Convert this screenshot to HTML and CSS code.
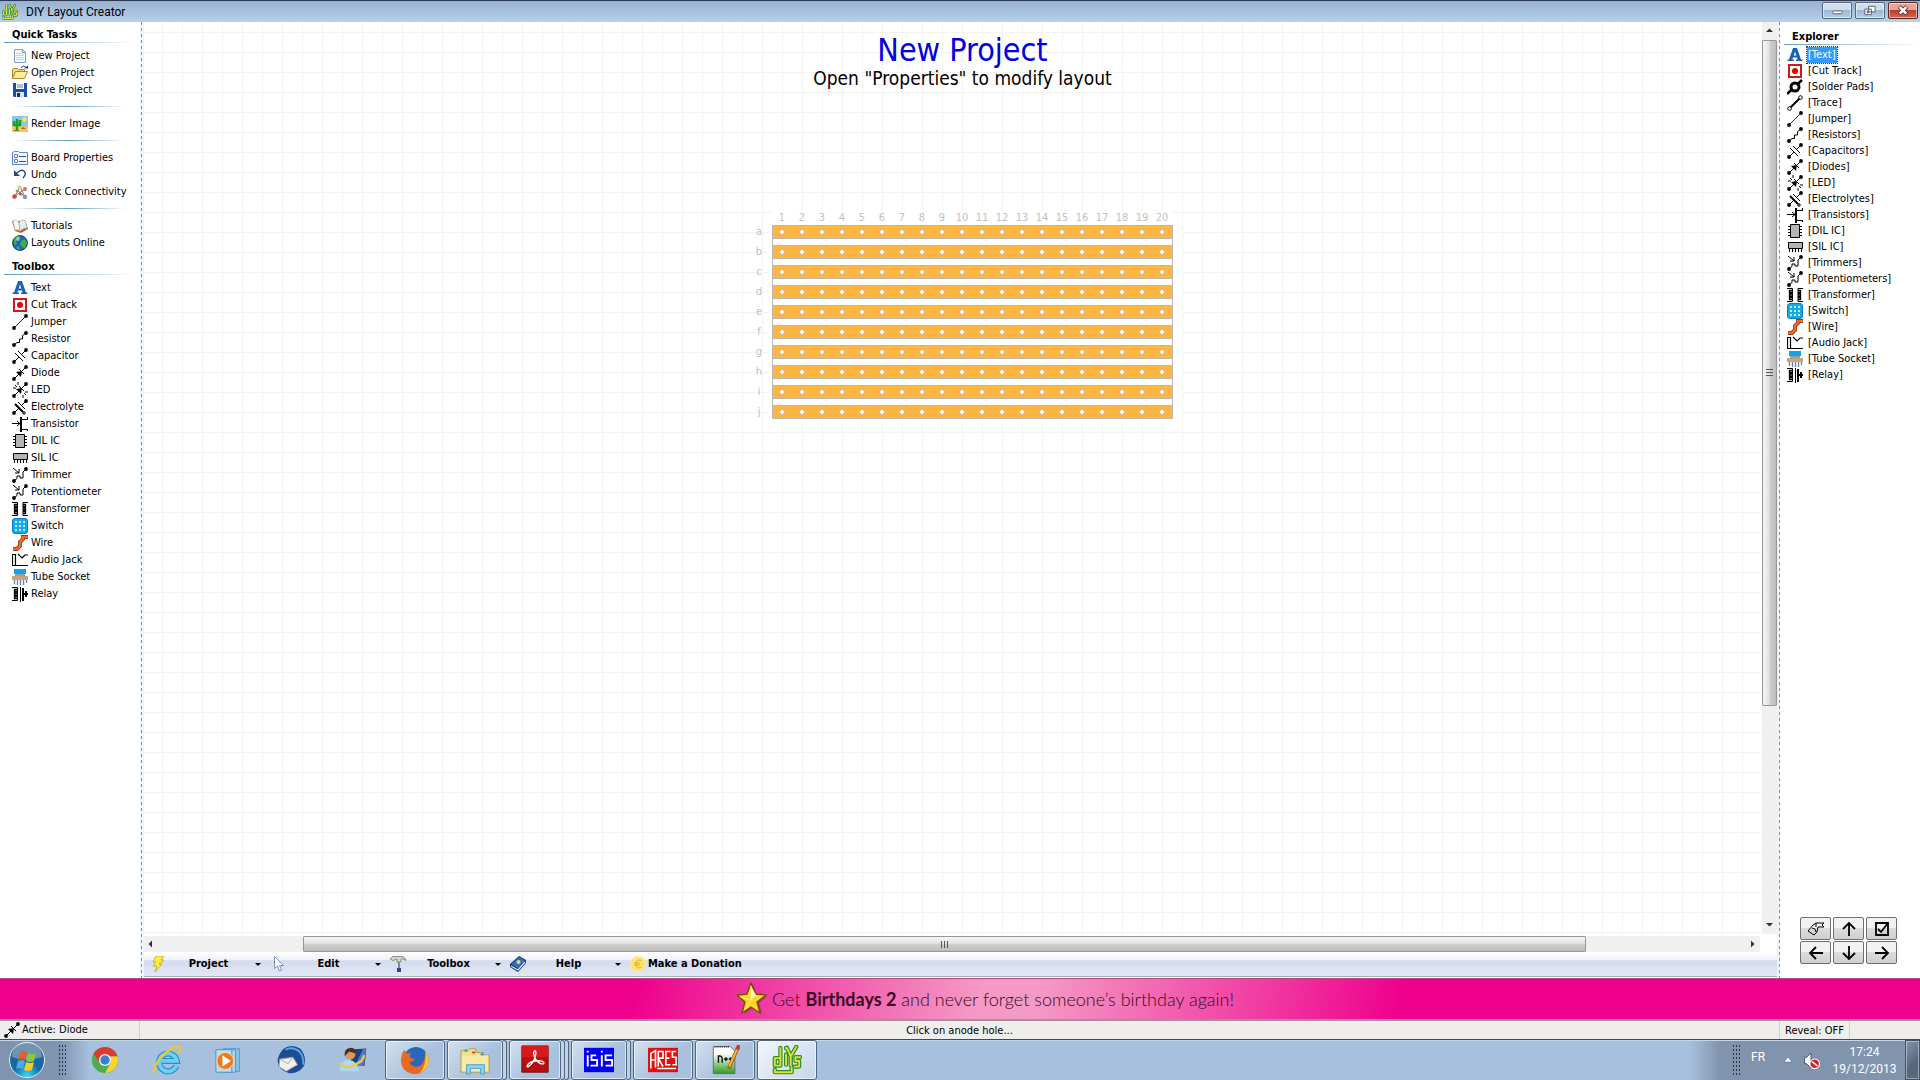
FILE: index.html
```html
<!DOCTYPE html>
<html lang="en">
<head>
    <meta charset="UTF-8">
    <meta name="viewport" content="width=device-width, initial-scale=1.0">
    <title>DIY Layout Creator</title>
    <link rel="stylesheet" href="styles.css">
</head>
<body>
    <!-- Icon sprite -->
    <svg class="sprite" aria-hidden="true">
        <symbol id="i-new" viewBox="0 0 16 16"><path d="M2.5 1.5h8l3 3v10h-11z" fill="#f6f9fd" stroke="#7f9cc4"/><path d="M10.500 1.500v3h3" fill="none" stroke="#7f9cc4"/><path d="M4 5.500h6M4 7.500h8M4 9.500h8M4 11.500h8" stroke="#c6d2e4"/></symbol>
        <symbol id="i-open" viewBox="0 0 16 16"><path d="M.5 13.500v-9l1-1h4l1 1h6v2" fill="#f5d76a" stroke="#a98a2a"/><path d="M.5 13.500l3-7h12l-3 7z" fill="#fdeea0" stroke="#a98a2a"/><path d="M9 2.500q3-3 5 0" fill="none" stroke="#1d3f7d"/><path d="M12 3.500h4v-3z" fill="#1d3f7d"/></symbol>
        <symbol id="i-save" viewBox="0 0 16 16"><path d="M1 1h14v14H2l-1-1z" fill="#1450a8"/><path d="M4 1h8v6H4z" fill="#fff"/><path d="M5 3h6M5 5h6" stroke="#5e7fb5"/><path d="M4 10h8v5H4z" fill="#d8e2f0"/><path d="M5 11h3v4H5z" fill="#0e3270"/></symbol>
        <symbol id="i-render" viewBox="0 0 16 16"><path d="M0 0h16v16H0z" fill="#8cc4f4"/><path d="M0 10q6-2 16 1v5H0z" fill="#f2c55d"/><circle cx="12.500" cy="3.500" r="2.200" fill="#ffee3c"/><path d="M5 14V3M2 5v4h3M8 4v5H5" fill="none" stroke="#14a51c" stroke-width="2.500"/><path d="M9 13l2-2 3 2z" fill="#a8642a"/><path d="M2 14.500h5" stroke="#a8642a"/></symbol>
        <symbol id="i-board" viewBox="0 0 16 16"><path d="M.5 14.500v-12l2-1h4l1 1h8v12z" fill="#f4f8fd" stroke="#5c86bf"/><path d="M2.500 4.500h3v3h-3zM2.500 9.500h3v3h-3z" fill="#fff" stroke="#5c86bf"/><path d="M7 6.500h7M7 11.500h7" stroke="#26508f"/></symbol>
        <symbol id="i-undo" viewBox="0 0 16 16"><path d="M5 6q4-4 7-2 3 3-1 7" fill="none" stroke="#26468f" stroke-width="1.400"/><path d="M2 3v6h6z" fill="#26468f"/></symbol>
        <symbol id="i-check" viewBox="0 0 16 16"><path d="M3 12l5-9 5 10M3 12l10-7M5 6l8 7" fill="none" stroke="#777"/><circle cx="7.500" cy="3" r="2" fill="#d8cf92"/><circle cx="13" cy="5" r="2" fill="#e06a50"/><circle cx="2.500" cy="12.500" r="2.300" fill="#cf4a34"/><circle cx="5" cy="7" r="1.300" fill="#8a9c5d"/><circle cx="13" cy="13" r="2.200" fill="#7799d6"/><circle cx="8.500" cy="10" r="1.500" fill="#d04a35"/></symbol>
        <symbol id="i-book" viewBox="0 0 16 16"><path d="M0 3l3 10 6 2 7-4-3-8z" fill="#b3692e"/><path d="M1 2q4-1 6 3l1 8q-2-2-5-1z" fill="#fdf7ee" stroke="#c9b49c" stroke-width=".6"/><path d="M7 5q2-4 6-3l2 8q-4 0-7 3z" fill="#e4edf8" stroke="#9a9a9a" stroke-width=".6"/></symbol>
        <symbol id="i-globe" viewBox="0 0 16 16"><circle cx="8" cy="8" r="7.500" fill="#1e63c8" stroke="#0b2c66" stroke-width=".8"/><path d="M2 4q3-4 6-3l-1 3-3 2 1 3-3 1zM9 6l4-2 2 4-2 5-3-1-2-3zM4 12l3-1 1 4q-3 0-4-3z" fill="#3bb537"/><circle cx="6" cy="4" r="2" fill="#bfe6ff" opacity=".6"/></symbol>
        <symbol id="i-text" viewBox="0 0 16 16"><path d="M6 1h4l4 11.500h1.500V14H9V12.500h1.500L10 10.500H6l-.7 2H7V14H.5V12.500H2L5.500 2.500zM8 4.500L6.700 8.500h2.600z" fill="#1c62b4" fill-rule="evenodd"/></symbol>
        <symbol id="i-cut" viewBox="0 0 16 16"><path d="M2 2h12v12H2z" fill="#fff" stroke="#d01818" stroke-width="2"/><circle cx="8" cy="8" r="3" fill="#e80000"/></symbol>
        <symbol id="i-pads" viewBox="0 0 16 16"><path d="M0 15L15 1" stroke="#000" stroke-width="2.500"/><circle cx="8" cy="8" r="4" fill="#fff" stroke="#000" stroke-width="3"/></symbol>
        <symbol id="i-trace" viewBox="0 0 16 16"><path d="M3 13L13 3" stroke="#000" stroke-width="2"/><circle cx="2.500" cy="13.500" r="1.800" fill="#fff" stroke="#000"/><circle cx="13.500" cy="2.500" r="1.800" fill="#fff" stroke="#000"/></symbol>
        <symbol id="dots" viewBox="0 0 16 16"><circle cx="2" cy="14" r="1.900"/><circle cx="14" cy="2" r="1.900"/></symbol>
        <symbol id="i-jumper" viewBox="0 0 16 16"><path d="M2 14L14 2" stroke="#2020a0"/><use href="#dots"/></symbol>
        <symbol id="i-resistor" viewBox="0 0 16 16"><path d="M2 14l3-2.500h2.500V8h3V4.500L14 2" fill="none" stroke="#000"/><use href="#dots"/></symbol>
        <symbol id="i-cap" viewBox="0 0 16 16"><path d="M2 14l5-5M9 7l5-5M3 5l8 8M6 3l7 7" stroke="#000"/><use href="#dots"/></symbol>
        <symbol id="i-diode" viewBox="0 0 16 16"><path d="M2 14L14 2M7 4l5 5" stroke="#000"/><path d="M4 7l6-1-1 6z"/><use href="#dots"/></symbol>
        <symbol id="i-led" viewBox="0 0 16 16"><path d="M2 14L14 2M7 4l5 5M3 3l2 2M6 0v3M1 6h3M12 11l2 2M11 13v3M13 10h3" stroke="#000"/><path d="M4 7l6-1-1 6z"/><use href="#dots"/></symbol>
        <symbol id="i-elec" viewBox="0 0 16 16"><path d="M2 14l5-5M9 7l5-5M6 3l7 7M10 14h4M12 12v4" stroke="#000"/><path d="M3 5l8 8" stroke="#000" stroke-width="2"/><use href="#dots"/></symbol>
        <symbol id="i-trans" viewBox="0 0 16 16"><path d="M0 7.500h8M5 5l3 2.500L5 10M10 3.500h6M10 13.500h6M15.500 1v3M15.500 13v2" fill="none" stroke="#000"/><path d="M9 1v15" stroke="#000" stroke-width="2"/></symbol>
        <symbol id="i-dil" viewBox="0 0 16 16"><path d="M3.500 1.500h9v13h-9z" fill="#b4b4b4" stroke="#000"/><path d="M1 3.500h2M1 6.500h2M1 9.500h2M1 12.500h2M13 3.500h2M13 6.500h2M13 9.500h2M13 12.500h2" stroke="#000"/></symbol>
        <symbol id="i-sil" viewBox="0 0 16 16"><path d="M1.500 3.500h14v6h-14z" fill="#b4b4b4" stroke="#000"/><path d="M2.500 10v3M5.500 10v3M8.500 10v3M11.500 10v3M14.500 10v3" stroke="#000"/></symbol>
        <symbol id="i-trim" viewBox="0 0 16 16"><path d="M2 14l3-2.500V9h3v2h3V5l3-3M1 1l6 5M7 2v4H3" fill="none" stroke="#000"/><use href="#dots"/></symbol>
        <symbol id="i-xfmr" viewBox="0 0 16 16"><path d="M0 1.500h5.500v13H0M16 1.500h-5v13h5" fill="none" stroke="#000"/><path d="M5 3.500H2.500v2H5M5 7H2.500v2H5M5 10.500H2.500v2H5M11 3.500h2.500v2H11M11 7h2.500v2H11M11 10.500h2.500v2H11" fill="none" stroke="#000" stroke-width="1.300"/></symbol>
        <symbol id="i-switch" viewBox="0 0 16 16"><rect x=".5" y=".5" width="15" height="15" rx="2.500" fill="#12aeec" stroke="#0b7fc0"/><path d="M3 4h10M3 8h10M3 12h10" stroke="#fff" stroke-width="1.600" stroke-dasharray="2"/></symbol>
        <symbol id="i-wire" viewBox="0 0 16 16"><path d="M1 14h4l3-3V7l3-3V2h5" fill="none" stroke="#a63c10" stroke-width="4"/><path d="M1 14h4l3-3V7l3-3V2h5" fill="none" stroke="#ee6a28" stroke-width="2.200"/></symbol>
        <symbol id="i-jack" viewBox="0 0 16 16"><path d="M.5 2.500h3v11h-3zM4 13.500h12M6 2l4 4 3-3h3" fill="none" stroke="#000" stroke-width="1.200"/></symbol>
        <symbol id="i-tube" viewBox="0 0 16 16"><path d="M2 0h12v5H2z" fill="#10a4e6"/><path d="M3 6h10" stroke="#246"/><path d="M0 7h16v4H0z" fill="#c4a582"/><path d="M2.500 11v4M5.500 11v5M8.500 11v5M11.500 11v5M14.500 11v3" stroke="#6c7f96" stroke-width="1.300"/></symbol>
        <symbol id="i-relay" viewBox="0 0 16 16"><path d="M0 1.500h5.500v13H0M8.500 1v15" fill="none" stroke="#000"/><path d="M5 3.500H2.500v2H5M5 7H2.500v2H5M5 10.500H2.500v2H5" fill="none" stroke="#000" stroke-width="1.300"/><path d="M11 2v13M12 8h4M14 5v6" stroke="#000" stroke-width="2"/></symbol>
        <symbol id="i-diy" viewBox="0 0 32 32"><g fill="none" stroke-linecap="round" stroke-linejoin="round"><path d="M9 3v19H3v-8h5M15 3v1M15 10v11M20 12l-4-9M20 12l6-10M20 12v10M30 13h-5v4h4v6h-5M3 29h18M3 29v-3M21 29v-5" stroke="#2f8a28" stroke-width="4.500"/><path d="M9 3v19H3v-8h5M15 3v1M15 10v11M20 12l-4-9M20 12l6-10M20 12v10M30 13h-5v4h4v6h-5M3 29h18M3 29v-3M21 29v-5" stroke="#d8e23a" stroke-width="2"/></g></symbol>
    </svg>

    <header class="titlebar">
        <svg class="icon"><use href="#i-diy"/></svg>
        <h1>DIY Layout Creator</h1>
        <div class="win-buttons">
            <button type="button" aria-label="Minimize"><svg viewBox="0 0 30 16"><rect x="10.500" y="8.500" width="10" height="3" rx="1" fill="#fff" stroke="#56606e"/></svg></button>
            <button type="button" aria-label="Restore"><svg viewBox="0 0 30 16"><path d="M13.500 3.500h7v6h-7zM9.500 6.500h7v6h-7z" fill="#fff" stroke="#56606e"/><path d="M12 8.500h2v2h-2z" fill="#9db4cf" stroke="#56606e"/></svg></button>
            <button type="button" class="close" aria-label="Close"><svg viewBox="0 0 30 16"><path d="M11 4l8 8M19 4l-8 8" stroke="#6b3434" stroke-width="4.500"/><path d="M11.500 4.500l7 7M18.500 4.500l-7 7" stroke="#fff" stroke-width="2.600"/></svg></button>
        </div>
    </header>

    <main class="workspace">
        <aside class="sidebar">
            <h2>Quick Tasks</h2>
            <ul class="tools">
                <li><button type="button"><svg class="icon"><use href="#i-new"/></svg>New Project</button></li>
                <li><button type="button"><svg class="icon"><use href="#i-open"/></svg>Open Project</button></li>
                <li><button type="button"><svg class="icon"><use href="#i-save"/></svg>Save Project</button></li>
                <li class="sep"></li>
                <li><button type="button"><svg class="icon"><use href="#i-render"/></svg>Render Image</button></li>
                <li class="sep"></li>
                <li><button type="button"><svg class="icon"><use href="#i-board"/></svg>Board Properties</button></li>
                <li><button type="button"><svg class="icon"><use href="#i-undo"/></svg>Undo</button></li>
                <li><button type="button"><svg class="icon"><use href="#i-check"/></svg>Check Connectivity</button></li>
                <li class="sep"></li>
                <li><button type="button"><svg class="icon"><use href="#i-book"/></svg>Tutorials</button></li>
                <li><button type="button"><svg class="icon"><use href="#i-globe"/></svg>Layouts Online</button></li>
            </ul>
            <h2>Toolbox</h2>
            <ul class="tools">
                <li><button type="button"><svg class="icon"><use href="#i-text"/></svg>Text</button></li>
                <li><button type="button"><svg class="icon"><use href="#i-cut"/></svg>Cut Track</button></li>
                <li><button type="button"><svg class="icon"><use href="#i-jumper"/></svg>Jumper</button></li>
                <li><button type="button"><svg class="icon"><use href="#i-resistor"/></svg>Resistor</button></li>
                <li><button type="button"><svg class="icon"><use href="#i-cap"/></svg>Capacitor</button></li>
                <li><button type="button"><svg class="icon"><use href="#i-diode"/></svg>Diode</button></li>
                <li><button type="button"><svg class="icon"><use href="#i-led"/></svg>LED</button></li>
                <li><button type="button"><svg class="icon"><use href="#i-elec"/></svg>Electrolyte</button></li>
                <li><button type="button"><svg class="icon"><use href="#i-trans"/></svg>Transistor</button></li>
                <li><button type="button"><svg class="icon"><use href="#i-dil"/></svg>DIL IC</button></li>
                <li><button type="button"><svg class="icon"><use href="#i-sil"/></svg>SIL IC</button></li>
                <li><button type="button"><svg class="icon"><use href="#i-trim"/></svg>Trimmer</button></li>
                <li><button type="button"><svg class="icon"><use href="#i-trim"/></svg>Potentiometer</button></li>
                <li><button type="button"><svg class="icon"><use href="#i-xfmr"/></svg>Transformer</button></li>
                <li><button type="button"><svg class="icon"><use href="#i-switch"/></svg>Switch</button></li>
                <li><button type="button"><svg class="icon"><use href="#i-wire"/></svg>Wire</button></li>
                <li><button type="button"><svg class="icon"><use href="#i-jack"/></svg>Audio Jack</button></li>
                <li><button type="button"><svg class="icon"><use href="#i-tube"/></svg>Tube Socket</button></li>
                <li><button type="button"><svg class="icon"><use href="#i-relay"/></svg>Relay</button></li>
            </ul>
        </aside>

        <div class="splitter"></div>

        <section class="editor">
            <div class="view">
                <div class="canvas">
                    <div class="sheet">
                        <h2 class="project-name">New Project</h2>
                        <p class="project-note">Open "Properties" to modify layout</p>
                        <div class="columns">
                            <span>1</span><span>2</span><span>3</span><span>4</span><span>5</span><span>6</span><span>7</span><span>8</span><span>9</span><span>10</span><span>11</span><span>12</span><span>13</span><span>14</span><span>15</span><span>16</span><span>17</span><span>18</span><span>19</span><span>20</span>
                        </div>
                        <div class="board-row">
                            <div class="rows">
                                <span>a</span><span>b</span><span>c</span><span>d</span><span>e</span><span>f</span><span>g</span><span>h</span><span>i</span><span>j</span>
                            </div>
                            <div class="board">
                                <div class="strip"></div>
                                <div class="strip"></div>
                                <div class="strip"></div>
                                <div class="strip"></div>
                                <div class="strip"></div>
                                <div class="strip"></div>
                                <div class="strip"></div>
                                <div class="strip"></div>
                                <div class="strip"></div>
                                <div class="strip"></div>
                            </div>
                        </div>
                    </div>
                </div>
                <div class="scroll-v">
                    <svg viewBox="0 0 15 18"><path d="M4 10l3.500-3.500L11 10z"/></svg>
                    <div class="track"><div class="thumb"><i></i></div></div>
                    <svg viewBox="0 0 15 18"><path d="M4 7l3.500 3.500L11 7z"/></svg>
                </div>
            </div>
            <div class="scroll-h">
                <svg viewBox="0 0 16 16"><path d="M8 4.500L4.500 8 8 11.500z"/></svg>
                <div class="track"><div class="thumb"><i></i></div></div>
                <svg viewBox="0 0 16 16"><path d="M7 4.500L10.500 8 7 11.500z"/></svg>
            </div>
            <nav class="menu">
                <button type="button">
                    <svg class="icon" viewBox="0 0 16 16"><path d="M6 0h8l-3 4h3L9 8h3l-7 8 2-6H3l3-4H3z" fill="#fbee3e" stroke="#c9a51c" stroke-width=".8"/></svg>
                    <span>Project</span><b></b>
                </button>
                <button type="button">
                    <svg class="icon" viewBox="0 0 16 16"><path d="M4.500.5v12l3-2.500 2 5 2-1-2-4.500h4z" fill="#fff" stroke="#7793bd"/></svg>
                    <span>Edit</span><b></b>
                </button>
                <button type="button">
                    <svg class="icon" viewBox="0 0 16 16"><path d="M0 3l3-2.500h9q3 .5 4 4l-3-1.500h-2v3H7V3L3 4.500z" fill="#d5d5d5" stroke="#777" stroke-width=".8"/><path d="M9 6v6" stroke="#888" stroke-width="2"/><path d="M7 12h4v4H7z" fill="#1c4d96"/></svg>
                    <span>Toolbox</span><b></b>
                </button>
                <button type="button">
                    <svg class="icon" viewBox="0 0 16 16"><path d="M0 8L9 0l7 4v3l-8 9-8-5z" fill="#123068"/><path d="M1 8l8-7 6 3.500-7 8z" fill="#2e6fc0"/><path d="M1 10l7 4 7-8" fill="none" stroke="#e6edf8" stroke-width="1.200"/><circle cx="8.500" cy="6" r="2" fill="#f4d94c"/></svg>
                    <span>Help</span><b></b>
                </button>
                <button type="button" class="donate">
                    <svg class="icon" viewBox="0 0 16 16"><circle cx="8" cy="8" r="7.500" fill="#fbe374" stroke="#f6ee9e"/><path d="M11.500 4.500q-5-2-5.500 3.500t5.500 3.500M4 7h6M4 9h6" fill="none" stroke="#e8a92c"/></svg>
                    <span>Make a Donation</span>
                </button>
            </nav>
        </section>

        <div class="splitter right"></div>

        <aside class="explorer">
            <h2>Explorer</h2>
            <ul class="tools">
                <li><button type="button" class="selected"><svg class="icon"><use href="#i-text"/></svg><span>[Text]</span></button></li>
                <li><button type="button"><svg class="icon"><use href="#i-cut"/></svg><span>[Cut Track]</span></button></li>
                <li><button type="button"><svg class="icon"><use href="#i-pads"/></svg><span>[Solder Pads]</span></button></li>
                <li><button type="button"><svg class="icon"><use href="#i-trace"/></svg><span>[Trace]</span></button></li>
                <li><button type="button"><svg class="icon"><use href="#i-jumper"/></svg><span>[Jumper]</span></button></li>
                <li><button type="button"><svg class="icon"><use href="#i-resistor"/></svg><span>[Resistors]</span></button></li>
                <li><button type="button"><svg class="icon"><use href="#i-cap"/></svg><span>[Capacitors]</span></button></li>
                <li><button type="button"><svg class="icon"><use href="#i-diode"/></svg><span>[Diodes]</span></button></li>
                <li><button type="button"><svg class="icon"><use href="#i-led"/></svg><span>[LED]</span></button></li>
                <li><button type="button"><svg class="icon"><use href="#i-elec"/></svg><span>[Electrolytes]</span></button></li>
                <li><button type="button"><svg class="icon"><use href="#i-trans"/></svg><span>[Transistors]</span></button></li>
                <li><button type="button"><svg class="icon"><use href="#i-dil"/></svg><span>[DIL IC]</span></button></li>
                <li><button type="button"><svg class="icon"><use href="#i-sil"/></svg><span>[SIL IC]</span></button></li>
                <li><button type="button"><svg class="icon"><use href="#i-trim"/></svg><span>[Trimmers]</span></button></li>
                <li><button type="button"><svg class="icon"><use href="#i-trim"/></svg><span>[Potentiometers]</span></button></li>
                <li><button type="button"><svg class="icon"><use href="#i-xfmr"/></svg><span>[Transformer]</span></button></li>
                <li><button type="button"><svg class="icon"><use href="#i-switch"/></svg><span>[Switch]</span></button></li>
                <li><button type="button"><svg class="icon"><use href="#i-wire"/></svg><span>[Wire]</span></button></li>
                <li><button type="button"><svg class="icon"><use href="#i-jack"/></svg><span>[Audio Jack]</span></button></li>
                <li><button type="button"><svg class="icon"><use href="#i-tube"/></svg><span>[Tube Socket]</span></button></li>
                <li><button type="button"><svg class="icon"><use href="#i-relay"/></svg><span>[Relay]</span></button></li>
            </ul>
            <div class="move-pad">
                <button type="button" aria-label="Rotate"><svg viewBox="0 0 18 16"><path d="M1 10l5-6 3-2h8l-2 2 2 2h-6l-1 5-3 3zM5 7l3 1 1 3M9 2v4" fill="none" stroke="#000"/></svg></button>
                <button type="button" aria-label="Up"><svg viewBox="0 0 18 16"><path d="M9 15V3M3 8l6-6 6 6" fill="none" stroke="#000" stroke-width="1.800"/></svg></button>
                <button type="button" aria-label="Select"><svg viewBox="0 0 18 16"><path d="M3 2h12v12H3z" fill="none" stroke="#000" stroke-width="1.800"/><path d="M5 8l3 3 7-9" fill="none" stroke="#000" stroke-width="1.800"/></svg></button>
                <button type="button" aria-label="Left"><svg viewBox="0 0 18 16"><path d="M16 8H4M9 2L3 8l6 6" fill="none" stroke="#000" stroke-width="1.800"/></svg></button>
                <button type="button" aria-label="Down"><svg viewBox="0 0 18 16"><path d="M9 1v12M3 8l6 6 6-6" fill="none" stroke="#000" stroke-width="1.800"/></svg></button>
                <button type="button" aria-label="Right"><svg viewBox="0 0 18 16"><path d="M2 8h12M9 2l6 6-6 6" fill="none" stroke="#000" stroke-width="1.800"/></svg></button>
            </div>
        </aside>
    </main>

    <a class="banner" href="#">
        <svg class="star" viewBox="0 0 32 34"><path d="M17 2l4 11 10 1-8 7 3 11-9-6-9 6 3-11-8-7 10-1z" fill="#6b2038" opacity=".5"/><path d="M15 1l4 11 11 1-9 7 3 11-9-6-9 6 3-11-8-7 10-1z" fill="#fbd824" stroke="#75520b" stroke-width="1.400"/><path d="M15 4v14l5-5M15 18l-11-3M15 18l-6 10" fill="#fff6a0" stroke="#fff3a0" stroke-width=".8"/></svg>
        <span>Get <strong>Birthdays 2</strong> and never forget someone’s birthday again!</span>
    </a>

    <footer class="statusbar">
        <div class="active-tool"><svg class="icon"><use href="#i-diode"/></svg>Active: Diode</div>
        <div class="hint">Click on anode hole...</div>
        <div class="reveal">Reveal: OFF</div>
        <div class="rest"></div>
    </footer>

    <div class="taskbar">
        <button type="button" class="start" aria-label="Start">
            <svg viewBox="0 0 38 38"><defs><radialGradient id="orb" cx=".5" cy=".95" r=".9"><stop offset="0" stop-color="#37d7fb"/><stop offset=".45" stop-color="#0d6aa5"/><stop offset="1" stop-color="#3c6685"/></radialGradient></defs><circle cx="19" cy="19" r="17.500" fill="url(#orb)" stroke="#dcebf5"/><path d="M4 16a15 15 0 0130 0q-15 5-30 0z" fill="#fff" opacity=".3"/><path d="M12 11q4-2 7 0l-2 8q-3-2-7 0z" fill="#ec5a25"/><path d="M20 12q4 2 8 0l-2 8q-4 2-8 0z" fill="#8cc63c"/><path d="M10 20q4-2 7 0l-2 8q-3-2-7 0z" fill="#4fa9e8"/><path d="M18 21q4 2 8 0l-2 8q-4 2-8 0z" fill="#fcc62c"/></svg>
        </button>
        <div class="grip"></div>
        <div class="pinned">
            <button type="button" aria-label="Chrome"><svg viewBox="0 0 32 32"><circle cx="16" cy="16" r="14" fill="#4bae4f"/><path d="M28 9a14 14 0 01-12 21l6-11q1-4-2-7h9z" fill="#fcd22e"/><path d="M4 9l6 10 6-7h13L28 9A14 14 0 004 9z" fill="#dc3a2c"/><circle cx="16" cy="16" r="6.500" fill="#f2f2f2"/><circle cx="16" cy="16" r="5" fill="#3b7fd4"/></svg></button>
            <button type="button" aria-label="Internet Explorer"><svg viewBox="0 0 32 32"><path d="M26 22a9.500 9.500 0 11.500-5H10" fill="none" stroke="#2a8fd0" stroke-width="6.500"/><path d="M26 22a9.500 9.500 0 11.500-5H10" fill="none" stroke="#6fd0f6" stroke-width="4"/><path d="M3 30Q-1 27 9 14 23-1 29 2q2 2-1 7" fill="none" stroke="#f3c52c" stroke-width="2.500"/></svg></button>
            <button type="button" aria-label="Media Player"><svg viewBox="0 0 32 32"><path d="M10 4h17v24H10z" fill="#8cc4e4" stroke="#4c94c2"/><path d="M7 5h16v24H7z" fill="#a8d6ee" stroke="#4c94c2"/><path d="M2 5h17v24H2z" fill="#b8def2" stroke="#4c94c2"/><circle cx="12" cy="17" r="9" fill="#ee7a1c" stroke="#fbd6ae"/><path d="M9 11v12l9-6z" fill="#fff"/></svg></button>
            <button type="button" aria-label="Thunderbird"><svg viewBox="0 0 32 32"><path d="M8 4Q17-2 26 4q7 8 4 18-6 9-16 8Q0 26 2 14 4 8 8 4z" fill="#1b4d92"/><path d="M10 5q8-4 15 2 5 6 4 14" fill="none" stroke="#58a8e6" stroke-width="2"/><path d="M4 15l14-2 5 8-12 7-8-5z" fill="#f0f0ee" stroke="#999"/><path d="M4 15l9 5 5-7" fill="none" stroke="#aaa"/></svg></button>
            <button type="button" aria-label="Remote Support"><svg viewBox="0 0 32 32"><path d="M13 4l18-1-2 20-16-1z" fill="#1d3f86" stroke="#b7bcc4" stroke-width="1.500"/><path d="M27 4l3-1-2 18-10 1z" fill="#4a7fc8"/><circle cx="13" cy="10" r="5.500" fill="#d29a5e"/><path d="M7 12q-1-9 8-9 5 2 4 6l-7-2z" fill="#4c3018"/><path d="M2 28q0-12 10-12 9 1 10 12z" fill="#a8dcf2"/><path d="M1 19q6 10 24-2l3-6" fill="none" stroke="#f3ca3e" stroke-width="2.500"/></svg></button>
        </div>
        <div class="running">
            <div class="task"><button type="button" aria-label="Firefox"><svg viewBox="0 0 32 32"><circle cx="17" cy="15" r="13" fill="#2769b8"/><path d="M27 6q6 9 2 17-5 9-14 8Q2 29 1 17 1 9 5 5l2 4 5-1q-3 4 0 6l4 1q-2 3-6 3 3 6 9 5 8-2 8-17z" fill="#ea6820"/><path d="M27 6q6 9 2 17-3 5-8 7 8-9 6-24z" fill="#fbc532"/></svg></button></div>
            <div class="task"><button type="button" aria-label="Explorer"><svg viewBox="0 0 32 32"><path d="M1 6h7l2-2h7v4h8v3h6v18H1z" fill="#f3dc8a" stroke="#b99c48"/><path d="M2 11h28v17H2z" fill="#faeaa8"/><path d="M5 6h3" stroke="#28a83c" stroke-width="2"/><path d="M13 8h3" stroke="#d04030" stroke-width="2"/><path d="M22 10h3" stroke="#2a8ad0" stroke-width="2"/><path d="M7 31V21h19v10h-4v-6H11v6z" fill="#8fd2ee" stroke="#4aa0cc"/></svg></button><i></i></div>
            <div class="task"><button type="button" aria-label="Acrobat Reader"><svg viewBox="0 0 32 32"><path d="M2 1h28v28H2z" fill="#b80f0f" stroke="#6e0a0a"/><path d="M2 1h28v12H2z" fill="#d81a1a"/><path d="M16 6q-3 1 0 8 4 7 9 6 2-2-3-3-8-1-13 3-3 4 0 3 5-3 7-10 2-6 0-7z" fill="none" stroke="#fff" stroke-width="1.400"/></svg></button><i></i><i></i></div>
            <div class="task"><button type="button" aria-label="ISIS"><svg viewBox="0 0 32 32"><path d="M0 3h32v26H0z" fill="#0000f0"/><path d="M4 11v12M4 6v2M13 11H8v5h6v6H7M19 11v12M19 6v2M30 11h-7v5h7v6h-7" fill="none" stroke="#fff" stroke-width="2"/></svg></button><i></i></div>
            <div class="task"><button type="button" aria-label="ARES"><svg viewBox="0 0 32 32"><path d="M0 3h32v26H0z" fill="#e01010"/><path d="M3 25V9l5-3v18M3 16h5M11 23V7h5v7h-5l5 9M24 7h-5v14h5M19 14h4M30 7h-4v6h4v8h-4M10 25h20" fill="none" stroke="#fff" stroke-width="1.700"/></svg></button></div>
            <div class="task"><button type="button" aria-label="Notepad++"><svg viewBox="0 0 32 32"><defs><linearGradient id="npp" x2="0" y2="1"><stop offset=".25" stop-color="#fff"/><stop offset="1" stop-color="#2f9c20"/></linearGradient></defs><path d="M3.500 1.500h18l5 5v24h-23z" fill="url(#npp)" stroke="#667"/><path d="M5 2h16" stroke="#444" stroke-width="2" stroke-dasharray="1"/><path d="M9 19v-8M9 12q4-1 4 3v4M15 15h4M17 13v4M20 15h4M22 13v4" fill="none" stroke="#111" stroke-width="1.500"/><path d="M30 2L20 25" stroke="#9c6312" stroke-width="4"/><path d="M29.500 3L20.500 23" stroke="#f0b63a" stroke-width="2.200"/><path d="M31 0l-2 5" stroke="#b8434c" stroke-width="4"/></svg></button></div>
            <div class="task current"><button type="button" aria-label="DIY Layout Creator"><svg><use href="#i-diy"/></svg></button></div>
        </div>
        <div class="tray">
            <div class="grip"></div>
            <span class="lang">FR</span>
            <button type="button" class="more" aria-label="Show hidden icons"><svg viewBox="0 0 10 8"><path d="M1 6l4-5 4 5z" fill="#fff" stroke="#55657d" stroke-width=".5"/></svg></button>
            <button type="button" class="sound" aria-label="Volume"><svg viewBox="0 0 16 16"><path d="M1.500 5v6h2l4 4V1l-4 4z" fill="#fff" stroke="#445" stroke-width=".8"/><circle cx="11" cy="11" r="4.500" fill="#d51f1f" stroke="#fff"/><path d="M8.500 9l5 4" stroke="#fff" stroke-width="1.500"/></svg></button>
            <div class="clock"><span>17:24</span><span>19/12/2013</span></div>
            <button type="button" class="show-desktop" aria-label="Show desktop"></button>
        </div>
    </div>
</body>
</html>
```
FILE: styles.css
```css
:root {
    --ui-font: 'DejaVu Sans Condensed', 'Noto Sans', sans-serif;
    --shell-font: Roboto, 'Noto Sans', sans-serif;
    --line: #5b9bc8;
    --pink: #ee008c;
    --copper: #ffb640;
    --label: #c0c0c0;
}

* {
    margin: 0;
    padding: 0;
    box-sizing: border-box;
}

body {
    height: 100vh;
    display: flex;
    flex-direction: column;
    overflow: hidden;
    background: #fff;
    color: #000;
    font: 11px/16px var(--ui-font);
}

button {
    background: none;
    border: none;
    color: inherit;
    font: inherit;
    cursor: pointer;
}

ul {
    list-style: none;
}

svg {
    display: block;
}

.sprite {
    position: absolute;
    width: 0;
    height: 0;
}

.icon {
    width: 16px;
    height: 16px;
    flex: none;
}

/* Title bar */
.titlebar {
    display: flex;
    align-items: center;
    height: 22px;
    padding: 0 2px;
    border-top: 1px solid #2b3850;
    background: linear-gradient(#96b1d0, #b9d0ea);
}

.titlebar h1 {
    flex: 1;
    margin-left: 8px;
    font: 12px/16px var(--shell-font);
}

.win-buttons {
    display: flex;
    align-self: flex-start;
    gap: 3px;
    padding-top: 1px;
}

.win-buttons button {
    width: 30px;
    height: 17px;
    border: 1px solid #55687f;
    border-radius: 2px;
    background: linear-gradient(#cfdded 45%, #9db7d4 50%, #b8cee6);
    box-shadow: inset 0 0 0 1px rgba(255, 255, 255, 0.5);
}

.win-buttons .close {
    border-color: #5a2626;
    background: linear-gradient(#e2a597 45%, #b8402c 50%, #cf6a4e);
}

/* Panels */
.workspace {
    flex: 1;
    display: flex;
    min-height: 0;
}

.sidebar {
    width: 140px;
    padding-top: 5px;
}

.explorer {
    width: 140px;
    display: flex;
    flex-direction: column;
    padding: 7px 0 14px 4px;
}

.sidebar h2,
.explorer h2 {
    height: 16px;
    padding-left: 8px;
    font-size: 11px;
    line-height: 16px;
    background: linear-gradient(90deg, var(--line), #fff) left bottom / 100% 1px no-repeat;
}

.sidebar h2 {
    margin: 0 4px 4px;
}

.explorer h2 {
    margin-bottom: 2px;
}

.sidebar .tools + h2 {
    margin-top: 8px;
}

.tools button {
    display: flex;
    align-items: center;
    gap: 3px;
    width: 100%;
    height: 17px;
    padding-left: 12px;
    text-align: left;
    white-space: nowrap;
}

.tools .sep {
    height: 17px;
    margin: 0 14px 0 12px;
    background: linear-gradient(90deg, #fff, var(--line), #fff) center / 100% 1px no-repeat;
}

.explorer .tools {
    flex: 1;
}

.explorer .tools button {
    height: 16px;
    gap: 4px;
    padding-left: 3px;
}

.explorer .tools span {
    padding: 0 1px;
}

.explorer .selected span {
    color: #fff;
    background: #3399ff;
    outline: 1px dotted #1a3a5a;
}

.splitter {
    width: 4px;
    background:
        repeating-linear-gradient(var(--line) 0 3px, transparent 3px 6px) 1px 0 / 1px 100% no-repeat,
        #edf5fb;
}

.splitter.right {
    width: 3px;
    background:
        repeating-linear-gradient(var(--line) 0 3px, transparent 3px 6px) 2px 0 / 1px 100% no-repeat,
        #edf5fb;
}

.move-pad {
    display: grid;
    grid-template-columns: repeat(3, 31px);
    gap: 1px 2px;
    padding-left: 16px;
}

.move-pad button {
    display: flex;
    align-items: center;
    justify-content: center;
    height: 23px;
    border: 1px solid #707070;
    border-radius: 2px;
    background: linear-gradient(#f2f2f2 48%, #dcdcdc 50%, #cfcfcf);
}

.move-pad svg {
    width: 18px;
    height: 16px;
}

/* Editor */
.editor {
    flex: 1;
    display: flex;
    flex-direction: column;
    min-width: 0;
    padding-bottom: 1px;
}

.view {
    flex: 1;
    display: flex;
    min-height: 0;
}

.canvas {
    position: relative;
    flex: 1;
    overflow: hidden;
    background:
        linear-gradient(90deg, #f3f3f3 1px, transparent 1px) 18px 0 / 20px 20px,
        linear-gradient(#f3f3f3 1px, transparent 1px) 0 10px / 20px 20px,
        #fff;
}

.sheet {
    position: absolute;
    left: 608px;
    top: 0;
    width: 421px;
    text-align: center;
}

.project-name {
    margin-top: 9px;
    color: #0000e0;
    font-weight: normal;
    font-size: 32px;
    line-height: 38px;
}

.project-note {
    font-size: 19px;
    line-height: 18px;
}

.columns {
    display: flex;
    margin-top: 124px;
    padding-left: 20px;
    color: var(--label);
    line-height: 14px;
}

.columns span {
    width: 20px;
    background: #fff;
}

.board-row {
    display: flex;
    align-items: flex-start;
}

.rows {
    width: 20px;
    color: var(--label);
}

.rows span {
    display: block;
    width: 14px;
    height: 20px;
    line-height: 14px;
}

.board {
    display: flex;
    flex-direction: column;
    flex: 1;
    gap: 6px;
    border: 1px solid #b8b8b8;
    border-width: 0 1px;
    background: #fff;
    box-shadow: 0 0 0 3px #fff, 8px 0 0 1px #fff;
}

.strip {
    height: 14px;
    border: 1px solid #b8b8b8;
    border-width: 1px 0;
    background: radial-gradient(circle, #fff 2px, #d9b987 2px 3px, transparent 3px) -1px 0 / 20px 12px, var(--copper);
}

/* Scrollbars */
.scroll-v {
    display: flex;
    flex-direction: column;
    width: 15px;
    background: #f0f0f0;
}

.scroll-v svg {
    width: 15px;
    height: 18px;
}

.scroll-h {
    display: flex;
    height: 16px;
    margin: 2px 17px 0 0;
    background: #f0f0f0;
}

.scroll-h svg {
    width: 16px;
    height: 16px;
}

.scroll-v path,
.scroll-h path {
    fill: #333;
}

.track {
    flex: 1;
}

.thumb {
    display: flex;
    align-items: center;
    justify-content: center;
    border: 1px solid #979797;
    border-radius: 1px;
}

.scroll-v .thumb {
    height: 76%;
    background: linear-gradient(90deg, #f5f5f5, #e4e4e4 45%, #cdcdcd 55%, #bdbdbd);
}

.scroll-h .thumb {
    width: 81%;
    height: 100%;
    margin-left: 9%;
    background: linear-gradient(#f5f5f5, #e4e4e4 45%, #cdcdcd 55%, #bdbdbd);
}

.thumb i {
    width: 7px;
    height: 7px;
    background: repeating-linear-gradient(#555 0 1px, transparent 1px 3px);
}

.scroll-h .thumb i {
    background: repeating-linear-gradient(90deg, #555 0 1px, transparent 1px 3px);
}

/* Menu */
.menu {
    display: flex;
    height: 25px;
    padding-left: 6px;
    border-bottom: 1px solid #a8adb8;
    background: linear-gradient(#fff, #edf1f9 34%, #d4dbed 36%, #e2e8f6);
}

.menu button {
    display: flex;
    align-items: center;
    width: 120px;
    font-weight: bold;
}

.menu span {
    flex: 1;
    padding-right: 4px;
    text-align: center;
    white-space: nowrap;
}

.menu b {
    width: 5px;
    margin-right: 9px;
    border: solid transparent;
    border-width: 3px 3px 0;
    border-top-color: #000;
}

.menu .donate {
    width: auto;
    gap: 2px;
}

/* Banner */
.banner {
    display: flex;
    align-items: center;
    justify-content: center;
    gap: 4px;
    height: 43px;
    padding-left: 50px;
    border-top: 1px solid #b04a86;
    border-bottom: 2px solid #a88d9c;
    background: linear-gradient(100deg, var(--pink) 33%, #f49ac4 51%, #f49ac4 54%, var(--pink) 73%);
    color: #3a0a26;
    text-decoration: none;
    font: 300 18px/24px Lato, 'Open Sans', sans-serif;
}

.banner strong {
    font-weight: 700;
}

.star {
    width: 32px;
    height: 34px;
}

/* Status bar */
.statusbar {
    display: flex;
    height: 18px;
    background: #f0eeec;
    line-height: 20px;
}

.active-tool {
    display: flex;
    align-items: center;
    gap: 2px;
    width: 140px;
    padding-left: 4px;
    border-right: 1px solid #d2d2d2;
}

.hint {
    flex: 1;
    text-align: center;
}

.reveal {
    width: 71px;
    border: 1px solid #d2d2d2;
    border-width: 0 1px;
    text-align: center;
}

.rest {
    width: 70px;
}

/* Taskbar */
.taskbar {
    display: flex;
    height: 41px;
    border-top: 1px solid #3a4a60;
    background: linear-gradient(90deg, #7f94af 60px, #a6c0dd 90px, #a6c0dd calc(100% - 230px), #8094ae calc(100% - 200px));
    box-shadow: inset 0 1px 0 #c4d6e8;
}

.start {
    width: 38px;
    margin-left: 8px;
}

.start svg {
    width: 38px;
    height: 38px;
}

.grip {
    width: 8px;
    height: 32px;
    margin: 4px 0 0 12px;
    background: radial-gradient(circle, #27364a 1px, transparent 1px) 0 0 / 3px 4px;
}

.pinned {
    display: flex;
    align-items: center;
    gap: 32px;
    padding: 0 17px 0 24px;
}

.pinned svg,
.task svg {
    width: 30px;
    height: 30px;
}

.pinned button {
    width: 30px;
}

.running {
    display: flex;
    flex: 1;
    gap: 2px;
}

.task {
    display: flex;
    width: 60px;
}

.task button {
    display: flex;
    align-items: center;
    justify-content: center;
    flex: 1;
    border: 1px solid #51657f;
    border-radius: 3px;
    background: linear-gradient(135deg, #d4e0ee, #a9c1de 60%);
    box-shadow: inset 0 0 0 1px rgba(255, 255, 255, 0.6);
}

.task i {
    width: 4px;
    border: 1px solid #51657f;
    border-left: none;
    border-radius: 0 3px 3px 0;
    background: #bfd2e7;
}

.task.current button {
    background: linear-gradient(135deg, #f2f6fb, #c4d7ec);
}

.tray {
    display: flex;
    align-items: center;
    width: 188px;
    color: #fff;
    font: 12px/17px var(--shell-font);
}

.tray .grip {
    align-self: flex-start;
    margin-left: 0;
}

.lang {
    margin: 0 18px 6px 11px;
}

.more svg {
    width: 10px;
    height: 8px;
}

.sound {
    margin-left: 10px;
}

.sound svg {
    width: 17px;
    height: 17px;
}

.clock {
    display: flex;
    flex: 1;
    flex-direction: column;
    padding: 2px 0 0 4px;
    text-align: center;
}

.show-desktop {
    align-self: stretch;
    width: 15px;
    border: 1px solid #43536b;
    background: linear-gradient(135deg, #8496ad, #56677e 60%);
    box-shadow: inset 0 0 0 1px rgba(255, 255, 255, 0.4);
}
```
